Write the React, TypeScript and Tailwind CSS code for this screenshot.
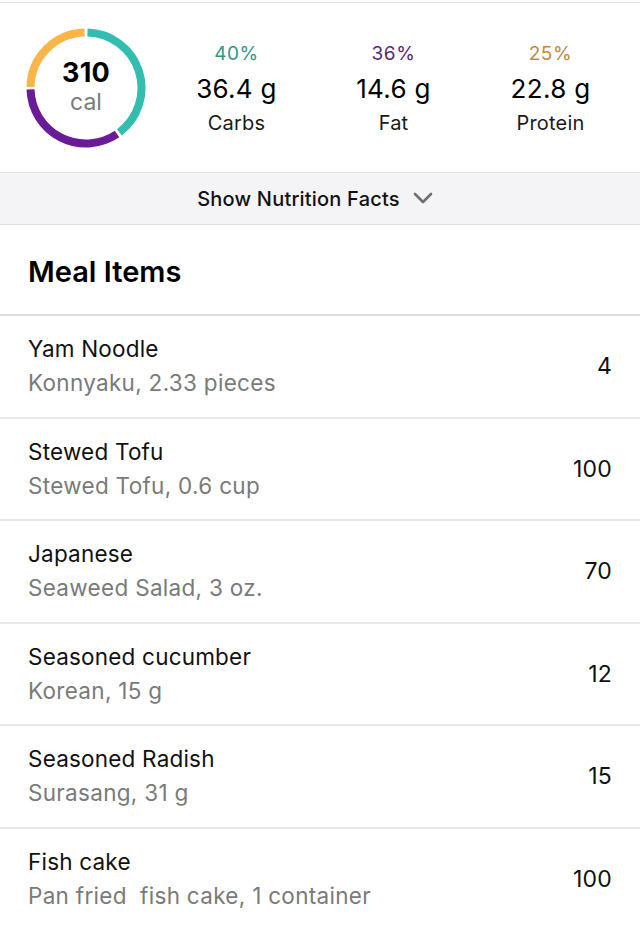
import React from 'react';

const macros = [
    { pct: '40%', value: '36.4 g', label: 'Carbs', color: 'text-[#2f968c]' },
    { pct: '36%', value: '14.6 g', label: 'Fat', color: 'text-[#5a2779]' },
    { pct: '25%', value: '22.8 g', label: 'Protein', color: 'text-[#c28a3c]' },
];

const items = [
    { name: 'Yam Noodle', detail: 'Konnyaku, 2.33 pieces', cal: '4' },
    { name: 'Stewed Tofu', detail: 'Stewed Tofu, 0.6 cup', cal: '100' },
    { name: 'Japanese', detail: 'Seaweed Salad, 3 oz.', cal: '70' },
    { name: 'Seasoned cucumber', detail: 'Korean, 15 g', cal: '12' },
    { name: 'Seasoned Radish', detail: 'Surasang, 31 g', cal: '15' },
    { name: 'Fish cake', detail: 'Pan fried\u00a0 fish cake, 1 container', cal: '100' },
];

// arc path from angle a to b (degrees, clockwise from 12 o'clock)
function arc(a: number, b: number, r = 55.5, c = 60) {
    const p = (deg: number) => {
        const rad = ((deg - 90) * Math.PI) / 180;
        return `${c + r * Math.cos(rad)} ${c + r * Math.sin(rad)}`;
    };
    const large = b - a > 180 ? 1 : 0;
    return `M ${p(a)} A ${r} ${r} 0 ${large} 1 ${p(b)}`;
}

function CalorieRing() {
    return (
        <div className="relative w-[120px] h-[120px] shrink-0">
            <svg width="120" height="120" viewBox="0 0 120 120">
                <path d={arc(1.5, 143)} stroke="#33bcb0" strokeWidth="8" fill="none" />
                <path d={arc(146, 268.5)} stroke="#6a1b97" strokeWidth="8" fill="none" />
                <path d={arc(271, 358.5)} stroke="#f9b548" strokeWidth="8" fill="none" />
            </svg>
            <div className="absolute inset-0 flex flex-col items-center justify-center">
                <span className="text-[27px] leading-[30px] font-bold text-black mt-[-2px] tracking-[0.3px]">310</span>
                <span className="text-[23px] leading-[28px] text-[#7b7b7b]">cal</span>
            </div>
        </div>
    );
}

export default function App() {
    return (
        <div className="w-[640px] min-h-[925px] bg-white pt-[2px] font-['Inter',sans-serif] text-black overflow-hidden">
            {/* Summary */}
            <div className="border-t border-[#e4e4e4] h-[170px] flex pl-[26px] pt-[25px]">
                <CalorieRing />
                <div className="ml-[12px] grid grid-cols-3 w-[471px] pt-[13px]">
                    {macros.map((m) => (
                        <div key={m.label} className="flex flex-col items-center">
                            <span className={`text-[19px] leading-[26px] tracking-[0.6px] ${m.color}`}>{m.pct}</span>
                            <span className="text-[26px] leading-[34px] mt-[5px] tracking-[0.3px]">{m.value}</span>
                            <span className="text-[20px] leading-[26px] mt-[4px] text-[#1a1a1a] tracking-[0.2px]">{m.label}</span>
                        </div>
                    ))}
                </div>
            </div>

            {/* Nutrition facts toggle */}
            <div className="border-t border-b border-[#dedede] bg-[#f4f4f6] h-[53px] flex items-center justify-center gap-[13px] pr-[10px]">
                <span className="text-[20px] font-medium tracking-[0.2px] text-[#111]">Show Nutrition Facts</span>
                <svg width="20" height="14" viewBox="0 0 20 14" className="mt-[-2px]">
                    <path d="M2 3 L10 11 L18 3" stroke="#6e6e73" strokeWidth="2.6" fill="none" strokeLinecap="round" strokeLinejoin="round" />
                </svg>
            </div>

            {/* Meal items header */}
            <div className="h-[91px] flex items-center px-[28px] border-b-2 border-[#dcdcdc]">
                <h2 className="text-[29px] font-semibold tracking-[0px] mt-[4px]">Meal Items</h2>
            </div>

            {/* Items */}
            {items.map((item) => (
                <div key={item.name} className="h-[102.5px] flex items-center justify-between px-[28px] border-b-2 border-[#e8e8e8]">
                    <div className="flex flex-col">
                        <span className="text-[22.5px] leading-[34px] tracking-[0.2px] text-[#111]">{item.name}</span>
                        <span className="text-[22.5px] leading-[34px] tracking-[0.3px] text-[#7a7a7a]">{item.detail}</span>
                    </div>
                    <span className="text-[23px] tracking-[0.2px] text-[#111]">{item.cal}</span>
                </div>
            ))}
        </div>
    );
}
